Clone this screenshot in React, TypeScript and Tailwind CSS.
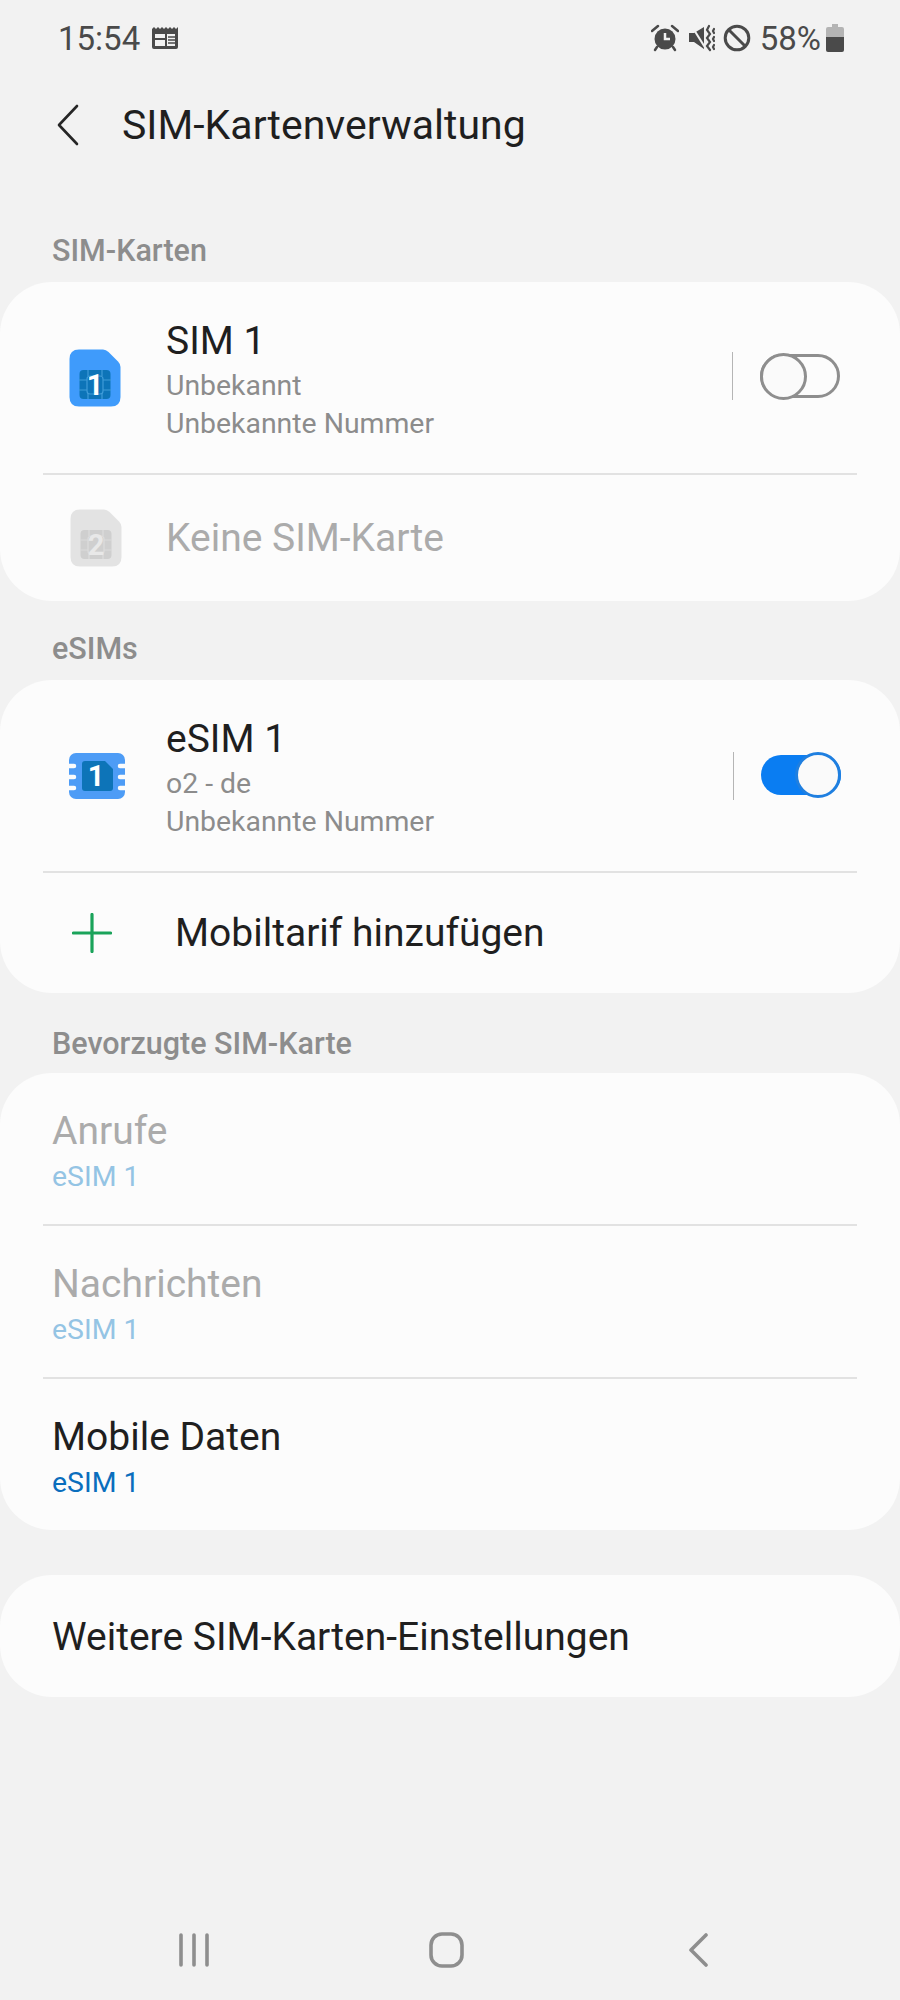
import React from 'react';

const Toggle: React.FC<{ on?: boolean }> = ({ on }) => (
  <div className={`flex items-center ${on ? '' : '-mt-[3px]'}`}>
    <div className="w-px h-[48px] bg-[#b5b5b5] mr-[27px]" />
    {on ? (
      <div className="relative w-[80px] h-[40px] -mt-[2px] rounded-full bg-[#0a7df2] mr-[59px]">
        <div className="absolute right-0 -top-[3px] w-[46px] h-[46px] rounded-full bg-[#fafafa] border-[3px] border-[#1f7fe0]" />
      </div>
    ) : (
      <div className="relative w-[80px] h-[44px] rounded-full border-[3px] border-[#8e8e8e] mr-[60px]">
        <div className="absolute -left-[3px] -top-[4px] w-[47px] h-[47px] rounded-full bg-[#fafafa] border-[3px] border-[#8e8e8e]" />
      </div>
    )}
  </div>
);

const SimIcon: React.FC<{ n: string; disabled?: boolean }> = ({ n, disabled }) => {
  const body = disabled ? '#e3e3e3' : '#3f9bfb';
  const chip = disabled ? '#cfcfcf' : '#0d74b8';
  const lines = disabled ? '#dcdcdc' : '#3f9bd8';
  return (
    <svg width="52" height="58" viewBox="0 0 52 58">
      <path d="M10 0.5H34Q37 0.5 39.5 3L49 12.5Q51.5 15 51.5 18V48Q51.5 57.5 42 57.5H10Q0.5 57.5 0.5 48V10Q0.5 0.5 10 0.5Z" fill={body} />
      <rect x="10.5" y="21" width="31" height="29" rx="4" fill={chip} />
      <path d="M10 31H18M10 41H18M34 31H42M34 41H42M19 21V27M33 21V27M19 44V50M33 44V50" stroke={lines} strokeWidth="1.2" />
      <rect x="18" y="27" width="16" height="18" rx="3" fill="none" stroke={lines} strokeWidth="1.2" />
      <text x="26" y="46" textAnchor="middle" fontSize="29" fontWeight="700" fontFamily="Roboto, sans-serif" fill={disabled ? '#e8e8e8' : '#ffffff'}>{n}</text>
    </svg>
  );
};

const EsimIcon: React.FC = () => (
  <svg width="56" height="46" viewBox="0 0 56 46">
    <rect x="0" y="0" width="56" height="46" rx="7" fill="#4d9cf6" />
    <path d="M0 13H5M0 24H5M0 35H5M51 13H56M51 24H56M51 35H56" stroke="#fcfcfc" strokeWidth="4.5" strokeLinecap="round" />
    <path d="M16 8Q13 8 13 11V35Q13 38 16 38H41Q44 38 44 35V16L36 8Z" fill="#0d74b8" />
    <text x="27" y="33" textAnchor="middle" fontSize="29" fontWeight="700" fontFamily="Roboto, sans-serif" fill="#ffffff">1</text>
  </svg>
);

const SectionLabel: React.FC<{ children: React.ReactNode; className?: string }> = ({ children, className }) => (
  <div className={`pl-[52px] text-[30.5px] leading-[34px] font-medium text-[#8d8d8d] ${className ?? ''}`}>{children}</div>
);

const Divider: React.FC = () => <div className="mx-[43px] h-[2px] bg-[#e2e2e2]" />;

const SimRow: React.FC<{ icon: React.ReactNode; title: string; sub: string; on?: boolean }> = ({ icon, title, sub, on }) => (
  <div className="flex items-center h-[191px]">
    <div className="w-[166px] pl-[69px] flex items-center">{icon}</div>
    <div className="flex-1 pt-[6px]">
      <div className="text-[39px] leading-[44px] text-[#1f1f1f]">{title}</div>
      <div className="text-[28.4px] leading-[38px] mt-[4px] text-[#8c8c8c]">{sub}</div>
      <div className="text-[28.4px] leading-[38px] text-[#8c8c8c]">Unbekannte Nummer</div>
    </div>
    <Toggle on={on} />
  </div>
);

const PrefRow: React.FC<{ title: string; disabled?: boolean }> = ({ title, disabled }) => (
  <div className="h-[151px] pl-[52px] pt-[6px] flex flex-col justify-center">
    <div className={`text-[39px] leading-[44px] ${disabled ? 'text-[#ababab]' : 'text-[#1f1f1f]'}`}>{title}</div>
    <div className={`text-[28.4px] leading-[36px] mt-[6px] ${disabled ? 'text-[#94c4e4]' : 'text-[#0a6ebd]'}`}>eSIM 1</div>
  </div>
);

export default function App() {
  return (
    <div className="w-[900px] h-[2000px] bg-[#f2f2f2] flex flex-col font-[Roboto,sans-serif] overflow-hidden">
      {/* Status bar */}
      <div className="h-[76px] pl-[58px] pr-[56px] flex items-center justify-between text-[#4a4a4a]">
        <div className="flex items-center">
          <span className="text-[33px] leading-none">15:54</span>
          <svg className="ml-[12px]" width="26" height="22" viewBox="0 0 26 22">
            <path d="M0 2L2 0L4 2L6 0L8 2L10 0L12 2L14 0L16 2L18 0L20 2L22 0L24 2L26 0V20Q26 22 24 22H2Q0 22 0 20Z" fill="#4a4a4a" />
            <rect x="3" y="7" width="20" height="12" fill="#f2f2f2" />
            <path d="M14 7V19M3 12H14" stroke="#4a4a4a" strokeWidth="2" />
            <path d="M16 10H23M16 13H23M16 16H23" stroke="#4a4a4a" strokeWidth="1.5" />
          </svg>
        </div>
        <div className="flex items-center">
          <svg width="28" height="28" viewBox="0 0 28 28">
            <path d="M1 7L7 2M27 7L21 2" stroke="#4a4a4a" strokeWidth="2.5" strokeLinecap="round" />
            <circle cx="14" cy="15" r="10.5" fill="#4a4a4a" />
            <path d="M14 9V15H19" stroke="#f2f2f2" strokeWidth="2.5" fill="none" />
            <path d="M6 23L4 26M22 23L24 26" stroke="#4a4a4a" strokeWidth="2.5" strokeLinecap="round" />
          </svg>
          <svg className="ml-[10px]" width="26" height="28" viewBox="0 0 26 28">
            <path d="M0 9H5L15 3V25L5 18H0Z" fill="#4a4a4a" />
            <path d="M2 1L17 25" stroke="#f2f2f2" strokeWidth="2" />
            <path d="M20 2L18 6L21 10L18 14L21 18L18 22L21 26M25 5L24 7L25 9M25 13L24 15L25 17M25 21L24 23L25 25" stroke="#4a4a4a" strokeWidth="2.2" fill="none" strokeLinecap="round" />
          </svg>
          <svg className="ml-[8px]" width="28" height="28" viewBox="0 0 28 28">
            <circle cx="14" cy="14" r="11.8" fill="none" stroke="#4a4a4a" strokeWidth="3" />
            <path d="M6 6L22 22" stroke="#4a4a4a" strokeWidth="3" />
          </svg>
          <span className="ml-[9px] text-[33px] leading-none">58%</span>
          <svg className="ml-[5px]" width="18" height="28" viewBox="0 0 18 28">
            <path d="M6 0H12V3H16Q18 3 18 5V13H0V5Q0 3 2 3H6Z" fill="#b4b4b4" />
            <path d="M0 13H18V26Q18 28 16 28H2Q0 28 0 26Z" fill="#4a4a4a" />
          </svg>
        </div>
      </div>

      {/* Title bar */}
      <div className="h-[98px] flex items-center">
        <svg className="ml-[56px]" width="24" height="42" viewBox="0 0 24 42">
          <path d="M21 2L3 21L21 40" fill="none" stroke="#262626" strokeWidth="2.6" strokeLinecap="round" strokeLinejoin="round" />
        </svg>
        <h1 className="ml-[42px] text-[41px] leading-none font-normal text-[#1f1f1f]">SIM-Kartenverwaltung</h1>
      </div>

      <SectionLabel className="mt-[60px]">SIM-Karten</SectionLabel>
      <section className="mt-[14px] bg-[#fcfcfc] rounded-[52px]">
        <SimRow icon={<SimIcon n="1" />} title="SIM 1" sub="Unbekannt" />
        <Divider />
        <div className="flex items-center h-[126px]">
          <div className="w-[166px] pl-[70px] flex items-center"><SimIcon n="2" disabled /></div>
          <div className="text-[39px] text-[#ababab]">Keine SIM-Karte</div>
        </div>
      </section>

      <SectionLabel className="mt-[31px]">eSIMs</SectionLabel>
      <section className="mt-[14px] bg-[#fcfcfc] rounded-[52px]">
        <SimRow icon={<EsimIcon />} title="eSIM 1" sub="o2 - de" on />
        <Divider />
        <div className="flex items-center h-[120px]">
          <svg className="ml-[72px]" width="40" height="40" viewBox="0 0 40 40">
            <path d="M20 1.5V38.5M1.5 20H38.5" stroke="#1aa35a" strokeWidth="3.2" strokeLinecap="round" />
          </svg>
          <div className="ml-[63px] text-[39px] text-[#1f1f1f]">Mobiltarif hinzufügen</div>
        </div>
      </section>

      <SectionLabel className="mt-[34px]">Bevorzugte SIM-Karte</SectionLabel>
      <section className="mt-[12px] bg-[#fcfcfc] rounded-[52px]">
        <PrefRow title="Anrufe" disabled />
        <Divider />
        <PrefRow title="Nachrichten" disabled />
        <Divider />
        <PrefRow title="Mobile Daten" />
      </section>

      <section className="mt-[45px] h-[122px] pl-[52px] pt-[3px] flex items-center bg-[#fcfcfc] rounded-[52px] text-[39px] text-[#1f1f1f]">
        Weitere SIM-Karten-Einstellungen
      </section>

      {/* Navigation bar */}
      <div className="mt-auto h-[67px] shrink-0 flex items-start pl-[178px]">
        <svg width="34" height="34" viewBox="0 0 34 34">
          <path d="M3 2V32M16 2V32M29 2V32" stroke="#8e8e8e" strokeWidth="3.6" strokeLinecap="round" />
        </svg>
        <svg className="ml-[217px] -mt-[1px]" width="35" height="36" viewBox="0 0 35 36">
          <rect x="2" y="2" width="31" height="32" rx="11" fill="none" stroke="#8e8e8e" strokeWidth="3.6" />
        </svg>
        <svg className="ml-[224px]" width="20" height="34" viewBox="0 0 20 34">
          <path d="M18 2L3 17L18 32" fill="none" stroke="#8e8e8e" strokeWidth="3.6" strokeLinecap="round" strokeLinejoin="round" />
        </svg>
      </div>
    </div>
  );
}
